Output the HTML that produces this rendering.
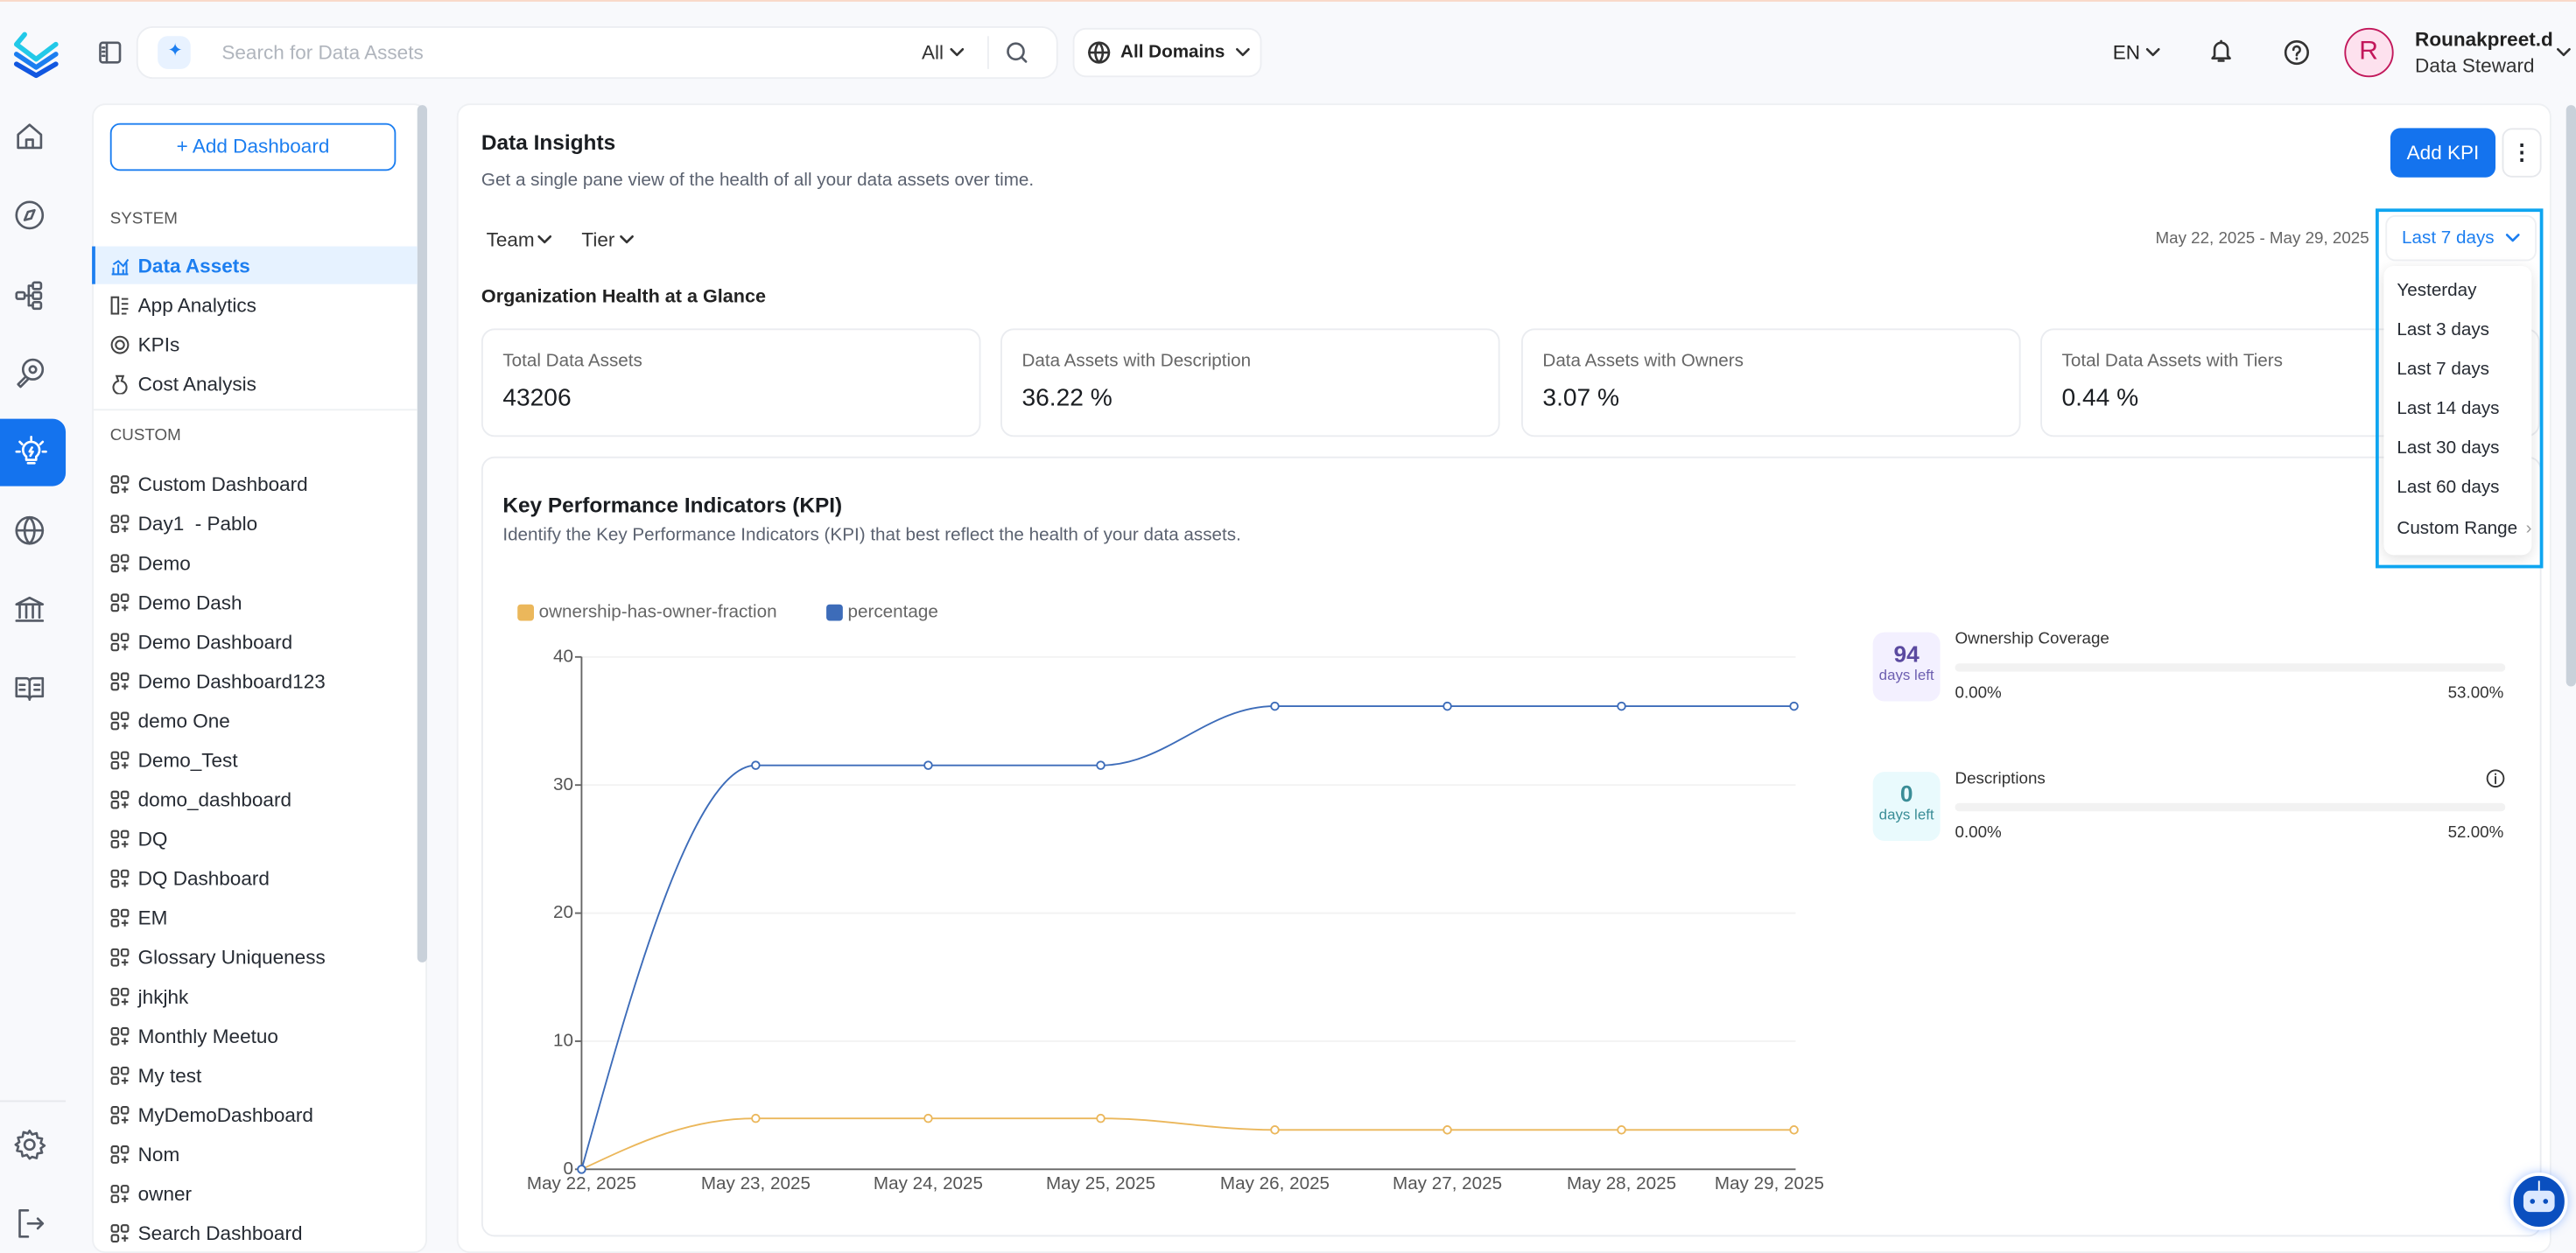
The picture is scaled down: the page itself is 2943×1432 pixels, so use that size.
<!DOCTYPE html>
<html><head><meta charset="utf-8">
<style>
*{box-sizing:border-box;margin:0;padding:0}
html,body{width:2943px;height:1424px;overflow:hidden;background:#f8f9fc}
#s{position:absolute;left:0;top:0;width:1568px;height:759px;transform:scale(1.87691);transform-origin:0 0;font-family:"Liberation Sans",sans-serif;color:#1f2329;background:#f8f9fc}
.a{position:absolute}
.t{position:absolute;white-space:nowrap}
.ico{position:absolute;width:20px;height:20px;fill:none;stroke:#555b66;stroke-width:1.4;stroke-linecap:round;stroke-linejoin:round}
.li{position:absolute;left:67px;font-size:12px;color:#262b33;white-space:nowrap}
.li svg{position:absolute;left:0;top:1px;width:12px;height:12px;fill:none;stroke:#444;stroke-width:1.1}
.li span{position:absolute;left:17px;top:0}
.card{position:absolute;background:#fff;border:1px solid #eaecf0;border-radius:8px}
.mi{position:absolute;left:1459px;font-size:11px;color:#262b33}
.xl{position:absolute;top:715px;font-size:11px;color:#555;transform:translateX(-50%)}
.yl{position:absolute;left:325px;width:24px;text-align:right;font-size:11px;color:#555}
</style></head><body><div id="s">
<div class="a" style="left:0;top:0;width:1568px;height:1px;background:#f9d8c8"></div>

<svg class="a" style="left:7px;top:16px;width:32px;height:32px" viewBox="0 0 32 32" fill="none" stroke-width="3" stroke-linejoin="round" stroke-linecap="round">
<path d="M8 5 L3 11 L15 20 L27 11" stroke="#22c9e8"/><path d="M3 17 L15 25 L27 17" stroke="#1c7ef0"/><path d="M3 23 L15 30 L27 23" stroke="#1257e0"/></svg>
<svg class="ico" style="left:59px;top:24px;width:16px;height:16px" viewBox="0 0 16 16"><rect x="2" y="2" width="12" height="12" rx="1.5"/><path d="M6 2v12M3.5 5h1M3.5 7.5h1M3.5 10h1"/></svg>

<div class="a" style="left:83px;top:16px;width:561px;height:32px;background:#fff;border:1px solid #eceef2;border-radius:10px"></div>
<div class="a" style="left:96px;top:22px;width:20px;height:20px;border-radius:6px;background:#e8f2ff"></div>
<div class="t" style="left:102px;top:24px;font-size:11px;color:#1c7ef0">✦</div>
<div class="t" style="left:135px;top:25px;font-size:12px;color:#b0b5bd">Search for Data Assets</div>
<div class="t" style="left:561px;top:25px;font-size:12px;color:#333">All</div>
<svg class="ico" style="left:578px;top:29px;width:9px;height:6px;stroke:#333" viewBox="0 0 9 6"><path d="M1 1l3.5 3.5L8 1"/></svg>
<div class="a" style="left:601px;top:22px;width:1px;height:20px;background:#eceef2"></div>
<svg class="ico" style="left:612px;top:25px;width:14px;height:14px" viewBox="0 0 14 14"><circle cx="6.3" cy="6.3" r="4.8"/><path d="M10 10l2.5 2.5"/></svg>
<div class="a" style="left:653px;top:17px;width:115px;height:30px;background:#fff;border:1px solid #eceef2;border-radius:8px"></div>
<svg class="ico" style="left:662px;top:25px;width:14px;height:14px;stroke:#333" viewBox="0 0 14 14"><circle cx="7" cy="7" r="6"/><path d="M1 7h12M7 1c-3 3-3 9 0 12M7 1c3 3 3 9 0 12"/></svg>
<div class="t" style="left:682px;top:26px;font-size:11px;color:#222;font-weight:bold">All Domains</div>
<svg class="ico" style="left:752px;top:29px;width:9px;height:6px;stroke:#333" viewBox="0 0 9 6"><path d="M1 1l3.5 3.5L8 1"/></svg>

<div class="t" style="left:1286px;top:25px;font-size:12px;color:#222">EN</div>
<svg class="ico" style="left:1306px;top:29px;width:9px;height:6px;stroke:#333" viewBox="0 0 9 6"><path d="M1 1l3.5 3.5L8 1"/></svg>
<svg class="ico" style="left:1344px;top:23px;width:16px;height:16px;stroke:#333" viewBox="0 0 16 16"><path d="M4 11V7a4 4 0 018 0v4l1.3 1.5H2.7zM6.5 14h3M8 3V2"/></svg>
<svg class="ico" style="left:1390px;top:24px;width:16px;height:16px;stroke:#333" viewBox="0 0 16 16"><circle cx="8" cy="8" r="6.8"/><path d="M6 6.3a2 2 0 113 1.7c-.8.4-1 .9-1 1.6M8 11.5v.3"/></svg>
<div class="a" style="left:1427px;top:17px;width:30px;height:30px;border-radius:50%;background:#fde1ee;border:1px solid #c2185b"></div>
<div class="t" style="left:1436px;top:23px;font-size:16px;color:#c2185b">R</div>
<div class="t" style="left:1470px;top:17px;font-size:12px;font-weight:bold;color:#222">Rounakpreet.d</div>
<div class="t" style="left:1470px;top:33px;font-size:12px;color:#333">Data Steward</div>
<svg class="ico" style="left:1556px;top:29px;width:9px;height:6px;stroke:#333" viewBox="0 0 9 6"><path d="M1 1l3.5 3.5L8 1"/></svg>

<svg class="ico" style="left:8px;top:73px" viewBox="0 0 20 20"><path d="M3 9l7-6 7 6v8H3zM8 17v-5h4v5"/></svg>
<svg class="ico" style="left:8px;top:121px" viewBox="0 0 20 20"><circle cx="10" cy="10" r="8"/><path d="M7 13l2-5 4-1-2 5z"/></svg>
<svg class="ico" style="left:8px;top:170px" viewBox="0 0 20 20"><rect x="2" y="8" width="5" height="4" rx="1"/><rect x="12" y="2" width="5" height="4" rx="1"/><rect x="12" y="8" width="5" height="4" rx="1"/><rect x="12" y="14" width="5" height="4" rx="1"/><path d="M7 10h5M9.5 4h2.5M9.5 16h2.5M9.5 4v12"/></svg>
<svg class="ico" style="left:8px;top:217px" viewBox="0 0 20 20"><circle cx="12" cy="8" r="6"/><circle cx="12" cy="8" r="2"/><path d="M7.5 12.5l-4.5 4.5 1.5 1.5 4.5-4.5"/></svg>
<div class="a" style="left:0;top:255px;width:40px;height:41px;border-radius:0 8px 8px 0;background:#1473ee"></div>
<svg class="ico" style="left:9px;top:265px;stroke:#fff" viewBox="0 0 20 20"><path d="M7 13a5 5 0 116 0v2H7zM8 17h4M10 1v2M3 4l1.5 1.5M17 4l-1.5 1.5M1 10h2M17 10h2M10.5 7.5l-1.5 2.5h2l-1.5 2.5"/></svg>
<svg class="ico" style="left:8px;top:313px" viewBox="0 0 20 20"><circle cx="10" cy="10" r="8"/><path d="M2 10h16M10 2c-4 4-4 12 0 16M10 2c4 4 4 12 0 16"/></svg>
<svg class="ico" style="left:8px;top:361px" viewBox="0 0 20 20"><path d="M2 7l8-4 8 4zM4 8v7M8 8v7M12 8v7M16 8v7M2 17h16"/></svg>
<svg class="ico" style="left:8px;top:409px" viewBox="0 0 20 20"><path d="M2 4h6a2 2 0 012 2v11a2 2 0 00-2-2H2zM18 4h-6a2 2 0 00-2 2v11a2 2 0 012-2h6zM4 8h3M4 11h3M13 8h3M13 11h3"/></svg>
<div class="a" style="left:0;top:670px;width:40px;height:1px;background:#e6e8ec"></div>
<svg class="ico" style="left:8px;top:687px" viewBox="0 0 20 20"><circle cx="10" cy="10" r="3"/><path d="M10 1.5l1.6 2.3 2.7-.8.5 2.8 2.8.5-.8 2.7 2.3 1.6-2.3 1.6.8 2.7-2.8.5-.5 2.8-2.7-.8L10 18.5l-1.6-2.3-2.7.8-.5-2.8-2.8-.5.8-2.7L1.5 10l2.3-1.6-.8-2.7 2.8-.5.5-2.8 2.7.8z"/></svg>
<svg class="ico" style="left:8px;top:735px" viewBox="0 0 20 20"><path d="M9 2H4v16h5M9 10h9M15 7l3 3-3 3"/></svg>

<div class="a" style="left:56px;top:63px;width:204px;height:700px;background:#fff;border-radius:8px;border:1px solid #eef0f3"></div>
<div class="a" style="left:254px;top:64px;width:6px;height:522px;background:#c9d1da;border-radius:3px"></div>
<div class="a" style="left:67px;top:75px;width:174px;height:29px;border:1px solid #1c7ef0;border-radius:6px;text-align:center;line-height:27px;font-size:12px;color:#1c7ef0">+ Add Dashboard</div>
<div class="t" style="left:67px;top:128px;font-size:10px;color:#555">SYSTEM</div>
<div class="a" style="left:56px;top:150px;width:198px;height:23px;background:#e6f2ff;border-left:2px solid #1c7ef0"></div>
<div class="li" style="top:155px;color:#1c7ef0;font-weight:bold"><svg viewBox="0 0 12 12" style="stroke:#1c7ef0"><path d="M1 11h10M2 11V7M5 11V5M8 11V8M10 11V4M2 5l3-2 3 3 3-4"/></svg><span>Data Assets</span></div>
<div class="li" style="top:179px"><svg viewBox="0 0 12 12"><rect x="1" y="1" width="4" height="10"/><path d="M7 2h4M7 5h4M7 8h4M7 11h3"/></svg><span>App Analytics</span></div>
<div class="li" style="top:203px"><svg viewBox="0 0 12 12"><circle cx="6" cy="6" r="5"/><circle cx="6" cy="6" r="2.5"/></svg><span>KPIs</span></div>
<div class="li" style="top:227px"><svg viewBox="0 0 12 12"><path d="M4 1h4L7 4a4 4 0 11-2 0z"/></svg><span>Cost Analysis</span></div>
<div class="a" style="left:56px;top:249px;width:198px;height:1px;background:#eef0f3"></div>
<div class="t" style="left:67px;top:260px;font-size:10px;color:#555">CUSTOM</div>

<div class="a" style="left:278px;top:63px;width:1275px;height:700px;background:#fff;border-radius:8px;border:1px solid #eef0f3"></div>
<div class="a" style="left:1562px;top:64px;width:6px;height:354px;background:#c9d1da;border-radius:3px"></div>
<div class="t" style="left:293px;top:79px;font-size:13px;font-weight:bold;color:#1a1d21">Data Insights</div>
<div class="t" style="left:293px;top:104px;font-size:11px;color:#5b6270">Get a single pane view of the health of all your data assets over time.</div>
<div class="a" style="left:1455px;top:78px;width:64px;height:30px;background:#1473ee;border-radius:6px;color:#fff;font-size:12px;text-align:center;line-height:30px">Add KPI</div>
<div class="a" style="left:1523px;top:78px;width:24px;height:30px;border:1px solid #e6e8ec;border-radius:6px;text-align:center;line-height:28px;font-weight:bold;font-size:13px">⋮</div>
<div class="t" style="left:296px;top:139px;font-size:12px;color:#333">Team</div>
<svg class="ico" style="left:327px;top:143px;width:9px;height:6px;stroke:#333" viewBox="0 0 9 6"><path d="M1 1l3.5 3.5L8 1"/></svg>
<div class="t" style="left:354px;top:139px;font-size:12px;color:#333">Tier</div>
<svg class="ico" style="left:377px;top:143px;width:9px;height:6px;stroke:#333" viewBox="0 0 9 6"><path d="M1 1l3.5 3.5L8 1"/></svg>
<div class="t" style="left:1312px;top:140px;font-size:10px;color:#666">May 22, 2025 - May 29, 2025</div>
<div class="t" style="left:293px;top:175px;font-size:11.5px;font-weight:bold;color:#222">Organization Health at a Glance</div>

<div class="card" style="left:293px;top:200px;width:304px;height:66px"></div>
<div class="card" style="left:609px;top:200px;width:304px;height:66px"></div>
<div class="card" style="left:926px;top:200px;width:304px;height:66px"></div>
<div class="card" style="left:1242px;top:200px;width:304px;height:66px"></div>
<div class="t" style="left:306px;top:214px;font-size:11px;color:#666">Total Data Assets</div>
<div class="t" style="left:306px;top:234px;font-size:15px;color:#1a1d21">43206</div>
<div class="t" style="left:622px;top:214px;font-size:11px;color:#666">Data Assets with Description</div>
<div class="t" style="left:622px;top:234px;font-size:15px;color:#1a1d21">36.22 %</div>
<div class="t" style="left:939px;top:214px;font-size:11px;color:#666">Data Assets with Owners</div>
<div class="t" style="left:939px;top:234px;font-size:15px;color:#1a1d21">3.07 %</div>
<div class="t" style="left:1255px;top:214px;font-size:11px;color:#666">Total Data Assets with Tiers</div>
<div class="t" style="left:1255px;top:234px;font-size:15px;color:#1a1d21">0.44 %</div>

<div class="card" style="left:293px;top:278px;width:1254px;height:475px"></div>
<div class="t" style="left:306px;top:300px;font-size:13px;font-weight:bold;color:#1a1d21">Key Performance Indicators (KPI)</div>
<div class="t" style="left:306px;top:320px;font-size:11px;color:#5b6270">Identify the Key Performance Indicators (KPI) that best reflect the health of your data assets.</div>

<div class="a" style="left:315px;top:368px;width:10px;height:10px;border-radius:2px;background:#ebb75b"></div>
<div class="t" style="left:328px;top:367px;font-size:11px;color:#666">ownership-has-owner-fraction</div>
<div class="a" style="left:503px;top:368px;width:10px;height:10px;border-radius:2px;background:#3d6cb9"></div>
<div class="t" style="left:516px;top:367px;font-size:11px;color:#666">percentage</div>

<svg class="a" style="left:0;top:0;width:1568px;height:759px" viewBox="0 0 1568 759">
<g stroke="#f2f2f2" stroke-width="1"><path d="M354 400H1093M354 478H1093M354 556H1093M354 634H1093"/></g>
<g stroke="#666" stroke-width="1" fill="none"><path d="M354 400V712H1093M350 400h4M350 478h4M350 556h4M350 634h4M350 712h4"/></g>
<path d="M354 712C380 620 420 466 460 466L670 466C710 466 735 430 776 430L1092 430" stroke="#3d6cb9" stroke-width="1" fill="none"/>
<path d="M354 712C390 695 420 681 460 681L670 681C710 681 735 688 776 688L1092 688" stroke="#ebb75b" stroke-width="1" fill="none"/>
<g fill="#fff" stroke="#3d6cb9"><circle cx="354" cy="712" r="2.3"/><circle cx="460" cy="466" r="2.3"/><circle cx="565" cy="466" r="2.3"/><circle cx="670" cy="466" r="2.3"/><circle cx="776" cy="430" r="2.3"/><circle cx="881" cy="430" r="2.3"/><circle cx="987" cy="430" r="2.3"/><circle cx="1092" cy="430" r="2.3"/></g>
<g fill="#fff" stroke="#ebb75b"><circle cx="460" cy="681" r="2.3"/><circle cx="565" cy="681" r="2.3"/><circle cx="670" cy="681" r="2.3"/><circle cx="776" cy="688" r="2.3"/><circle cx="881" cy="688" r="2.3"/><circle cx="987" cy="688" r="2.3"/><circle cx="1092" cy="688" r="2.3"/></g>
</svg>
<div class="yl" style="top:394px">40</div><div class="yl" style="top:472px">30</div><div class="yl" style="top:550px">20</div><div class="yl" style="top:628px">10</div><div class="yl" style="top:706px">0</div>
<div class="xl" style="left:354px">May 22, 2025</div><div class="xl" style="left:460px">May 23, 2025</div><div class="xl" style="left:565px">May 24, 2025</div><div class="xl" style="left:670px">May 25, 2025</div><div class="xl" style="left:776px">May 26, 2025</div><div class="xl" style="left:881px">May 27, 2025</div><div class="xl" style="left:987px">May 28, 2025</div><div class="xl" style="left:1077px">May 29, 2025</div>

<div class="a" style="left:1140px;top:385px;width:41px;height:42px;border-radius:7px;background:#f3f0ff;text-align:center"><div style="font-size:14px;font-weight:bold;color:#5b4aa0;margin-top:5px">94</div><div style="font-size:9px;color:#6d5fb0">days left</div></div>
<div class="t" style="left:1190px;top:384px;font-size:10px;color:#333">Ownership Coverage</div>
<div class="a" style="left:1190px;top:404px;width:335px;height:5px;border-radius:3px;background:#f2f2f2"></div>
<div class="t" style="left:1190px;top:417px;font-size:10px;color:#333">0.00%</div>
<div class="t" style="left:1490px;top:417px;font-size:10px;color:#333">53.00%</div>
<div class="a" style="left:1140px;top:470px;width:41px;height:42px;border-radius:7px;background:#e9fafd;text-align:center"><div style="font-size:14px;font-weight:bold;color:#3a8d97;margin-top:5px">0</div><div style="font-size:9px;color:#3a8d97">days left</div></div>
<div class="t" style="left:1190px;top:469px;font-size:10px;color:#333">Descriptions</div>
<svg class="ico" style="left:1513px;top:468px;width:12px;height:12px;stroke:#333;stroke-width:1" viewBox="0 0 12 12"><circle cx="6" cy="6" r="5"/><path d="M6 5v4M6 3.2v.3"/></svg>
<div class="a" style="left:1190px;top:489px;width:335px;height:5px;border-radius:3px;background:#f2f2f2"></div>
<div class="t" style="left:1190px;top:502px;font-size:10px;color:#333">0.00%</div>
<div class="t" style="left:1490px;top:502px;font-size:10px;color:#333">52.00%</div>

<div class="a" style="left:1452px;top:131px;width:92px;height:28px;background:#fff;border:1px solid #eef0f3;border-radius:6px"></div>
<div class="t" style="left:1462px;top:139px;font-size:11px;color:#1c7ef0">Last 7 days</div>
<svg class="ico" style="left:1525px;top:142px;width:9px;height:6px;stroke:#1c7ef0" viewBox="0 0 9 6"><path d="M1 1l3.5 3.5L8 1"/></svg>
<div class="a" style="left:1451px;top:162px;width:90px;height:176px;background:#fff;border-radius:6px;box-shadow:0 2px 8px rgba(0,0,0,.12)"></div>
<div class="mi" style="top:171px">Yesterday</div>
<div class="mi" style="top:195px">Last 3 days</div>
<div class="mi" style="top:219px">Last 7 days</div>
<div class="mi" style="top:243px">Last 14 days</div>
<div class="mi" style="top:267px">Last 30 days</div>
<div class="mi" style="top:291px">Last 60 days</div>
<div class="mi" style="top:316px">Custom Range <span style="color:#999;margin-left:2px">›</span></div>
<div class="a" style="left:1446px;top:127px;width:102px;height:219px;border:2px solid #0ea5f0"></div>

<div class="a" style="left:1528px;top:714px;width:35px;height:35px;border-radius:50%;background:#0a4fbf;border:2px solid #fff;box-shadow:0 0 6px rgba(80,140,255,.5)"></div>
<div class="a" style="left:1536px;top:725px;width:19px;height:13px;border-radius:4px;background:#dbe8ff"></div>
<div class="a" style="left:1540px;top:730px;width:3px;height:3px;border-radius:50%;background:#0a4fbf"></div>
<div class="a" style="left:1548px;top:730px;width:3px;height:3px;border-radius:50%;background:#0a4fbf"></div>
<div class="a" style="left:1545px;top:719px;width:1px;height:6px;background:#fff"></div>

<div style="position:absolute;left:0;top:0">
<div class="li" style="top:288px"><svg viewBox="0 0 12 12"><rect x="1" y="1" width="4" height="4" rx="1"/><rect x="7" y="1" width="4" height="4" rx="1"/><rect x="1" y="7" width="4" height="4" rx="1"/><path d="M9 7v4M7 9h4"/></svg><span>Custom Dashboard</span></div>
<div class="li" style="top:312px"><svg viewBox="0 0 12 12"><rect x="1" y="1" width="4" height="4" rx="1"/><rect x="7" y="1" width="4" height="4" rx="1"/><rect x="1" y="7" width="4" height="4" rx="1"/><path d="M9 7v4M7 9h4"/></svg><span>Day1&nbsp; - Pablo</span></div>
<div class="li" style="top:336px"><svg viewBox="0 0 12 12"><rect x="1" y="1" width="4" height="4" rx="1"/><rect x="7" y="1" width="4" height="4" rx="1"/><rect x="1" y="7" width="4" height="4" rx="1"/><path d="M9 7v4M7 9h4"/></svg><span>Demo</span></div>
<div class="li" style="top:360px"><svg viewBox="0 0 12 12"><rect x="1" y="1" width="4" height="4" rx="1"/><rect x="7" y="1" width="4" height="4" rx="1"/><rect x="1" y="7" width="4" height="4" rx="1"/><path d="M9 7v4M7 9h4"/></svg><span>Demo Dash</span></div>
<div class="li" style="top:384px"><svg viewBox="0 0 12 12"><rect x="1" y="1" width="4" height="4" rx="1"/><rect x="7" y="1" width="4" height="4" rx="1"/><rect x="1" y="7" width="4" height="4" rx="1"/><path d="M9 7v4M7 9h4"/></svg><span>Demo Dashboard</span></div>
<div class="li" style="top:408px"><svg viewBox="0 0 12 12"><rect x="1" y="1" width="4" height="4" rx="1"/><rect x="7" y="1" width="4" height="4" rx="1"/><rect x="1" y="7" width="4" height="4" rx="1"/><path d="M9 7v4M7 9h4"/></svg><span>Demo Dashboard123</span></div>
<div class="li" style="top:432px"><svg viewBox="0 0 12 12"><rect x="1" y="1" width="4" height="4" rx="1"/><rect x="7" y="1" width="4" height="4" rx="1"/><rect x="1" y="7" width="4" height="4" rx="1"/><path d="M9 7v4M7 9h4"/></svg><span>demo One</span></div>
<div class="li" style="top:456px"><svg viewBox="0 0 12 12"><rect x="1" y="1" width="4" height="4" rx="1"/><rect x="7" y="1" width="4" height="4" rx="1"/><rect x="1" y="7" width="4" height="4" rx="1"/><path d="M9 7v4M7 9h4"/></svg><span>Demo_Test</span></div>
<div class="li" style="top:480px"><svg viewBox="0 0 12 12"><rect x="1" y="1" width="4" height="4" rx="1"/><rect x="7" y="1" width="4" height="4" rx="1"/><rect x="1" y="7" width="4" height="4" rx="1"/><path d="M9 7v4M7 9h4"/></svg><span>domo_dashboard</span></div>
<div class="li" style="top:504px"><svg viewBox="0 0 12 12"><rect x="1" y="1" width="4" height="4" rx="1"/><rect x="7" y="1" width="4" height="4" rx="1"/><rect x="1" y="7" width="4" height="4" rx="1"/><path d="M9 7v4M7 9h4"/></svg><span>DQ</span></div>
<div class="li" style="top:528px"><svg viewBox="0 0 12 12"><rect x="1" y="1" width="4" height="4" rx="1"/><rect x="7" y="1" width="4" height="4" rx="1"/><rect x="1" y="7" width="4" height="4" rx="1"/><path d="M9 7v4M7 9h4"/></svg><span>DQ Dashboard</span></div>
<div class="li" style="top:552px"><svg viewBox="0 0 12 12"><rect x="1" y="1" width="4" height="4" rx="1"/><rect x="7" y="1" width="4" height="4" rx="1"/><rect x="1" y="7" width="4" height="4" rx="1"/><path d="M9 7v4M7 9h4"/></svg><span>EM</span></div>
<div class="li" style="top:576px"><svg viewBox="0 0 12 12"><rect x="1" y="1" width="4" height="4" rx="1"/><rect x="7" y="1" width="4" height="4" rx="1"/><rect x="1" y="7" width="4" height="4" rx="1"/><path d="M9 7v4M7 9h4"/></svg><span>Glossary Uniqueness</span></div>
<div class="li" style="top:600px"><svg viewBox="0 0 12 12"><rect x="1" y="1" width="4" height="4" rx="1"/><rect x="7" y="1" width="4" height="4" rx="1"/><rect x="1" y="7" width="4" height="4" rx="1"/><path d="M9 7v4M7 9h4"/></svg><span>jhkjhk</span></div>
<div class="li" style="top:624px"><svg viewBox="0 0 12 12"><rect x="1" y="1" width="4" height="4" rx="1"/><rect x="7" y="1" width="4" height="4" rx="1"/><rect x="1" y="7" width="4" height="4" rx="1"/><path d="M9 7v4M7 9h4"/></svg><span>Monthly Meetuo</span></div>
<div class="li" style="top:648px"><svg viewBox="0 0 12 12"><rect x="1" y="1" width="4" height="4" rx="1"/><rect x="7" y="1" width="4" height="4" rx="1"/><rect x="1" y="7" width="4" height="4" rx="1"/><path d="M9 7v4M7 9h4"/></svg><span>My test</span></div>
<div class="li" style="top:672px"><svg viewBox="0 0 12 12"><rect x="1" y="1" width="4" height="4" rx="1"/><rect x="7" y="1" width="4" height="4" rx="1"/><rect x="1" y="7" width="4" height="4" rx="1"/><path d="M9 7v4M7 9h4"/></svg><span>MyDemoDashboard</span></div>
<div class="li" style="top:696px"><svg viewBox="0 0 12 12"><rect x="1" y="1" width="4" height="4" rx="1"/><rect x="7" y="1" width="4" height="4" rx="1"/><rect x="1" y="7" width="4" height="4" rx="1"/><path d="M9 7v4M7 9h4"/></svg><span>Nom</span></div>
<div class="li" style="top:720px"><svg viewBox="0 0 12 12"><rect x="1" y="1" width="4" height="4" rx="1"/><rect x="7" y="1" width="4" height="4" rx="1"/><rect x="1" y="7" width="4" height="4" rx="1"/><path d="M9 7v4M7 9h4"/></svg><span>owner</span></div>
<div class="li" style="top:744px"><svg viewBox="0 0 12 12"><rect x="1" y="1" width="4" height="4" rx="1"/><rect x="7" y="1" width="4" height="4" rx="1"/><rect x="1" y="7" width="4" height="4" rx="1"/><path d="M9 7v4M7 9h4"/></svg><span>Search Dashboard</span></div>
</div>
</div></body></html>
